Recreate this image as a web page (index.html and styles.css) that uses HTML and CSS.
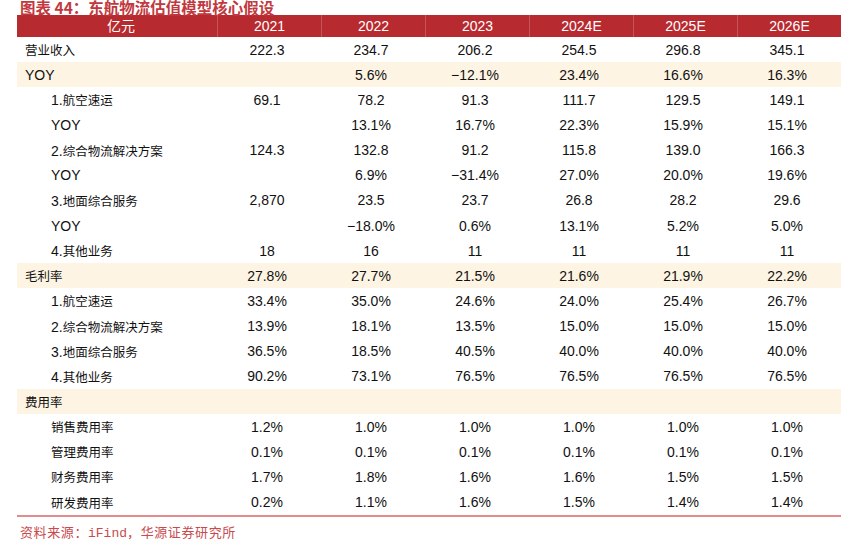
FILE: index.html
```html
<!DOCTYPE html>
<html lang="zh-CN">
<head>
<meta charset="utf-8">
<title>东航物流估值模型核心假设</title>
<link rel="stylesheet" href="styles.css">
</head>
<body>
<div class="page">
  <div class="title">图表 44：东航物流估值模型核心假设</div>
  <div class="table">
    <div class="row head"><div class="lab">亿元</div><div>2021</div><div>2022</div><div>2023</div><div>2024E</div><div>2025E</div><div>2026E</div></div>
    <div class="row"><div class="lab"><span class="zh">营业收入</span></div><div>222.3</div><div>234.7</div><div>206.2</div><div>254.5</div><div>296.8</div><div>345.1</div></div>
    <div class="row hl"><div class="lab">YOY</div><div></div><div>5.6%</div><div>−12.1%</div><div>23.4%</div><div>16.6%</div><div>16.3%</div></div>
    <div class="row"><div class="lab sub">1.<span class="zh">航空速运</span></div><div>69.1</div><div>78.2</div><div>91.3</div><div>111.7</div><div>129.5</div><div>149.1</div></div>
    <div class="row"><div class="lab sub">YOY</div><div></div><div>13.1%</div><div>16.7%</div><div>22.3%</div><div>15.9%</div><div>15.1%</div></div>
    <div class="row"><div class="lab sub">2.<span class="zh">综合物流解决方案</span></div><div>124.3</div><div>132.8</div><div>91.2</div><div>115.8</div><div>139.0</div><div>166.3</div></div>
    <div class="row"><div class="lab sub">YOY</div><div></div><div>6.9%</div><div>−31.4%</div><div>27.0%</div><div>20.0%</div><div>19.6%</div></div>
    <div class="row"><div class="lab sub">3.<span class="zh">地面综合服务</span></div><div>2,870</div><div>23.5</div><div>23.7</div><div>26.8</div><div>28.2</div><div>29.6</div></div>
    <div class="row"><div class="lab sub">YOY</div><div></div><div>−18.0%</div><div>0.6%</div><div>13.1%</div><div>5.2%</div><div>5.0%</div></div>
    <div class="row"><div class="lab sub">4.<span class="zh">其他业务</span></div><div>18</div><div>16</div><div>11</div><div>11</div><div>11</div><div>11</div></div>
    <div class="row hl"><div class="lab"><span class="zh">毛利率</span></div><div>27.8%</div><div>27.7%</div><div>21.5%</div><div>21.6%</div><div>21.9%</div><div>22.2%</div></div>
    <div class="row"><div class="lab sub">1.<span class="zh">航空速运</span></div><div>33.4%</div><div>35.0%</div><div>24.6%</div><div>24.0%</div><div>25.4%</div><div>26.7%</div></div>
    <div class="row"><div class="lab sub">2.<span class="zh">综合物流解决方案</span></div><div>13.9%</div><div>18.1%</div><div>13.5%</div><div>15.0%</div><div>15.0%</div><div>15.0%</div></div>
    <div class="row"><div class="lab sub">3.<span class="zh">地面综合服务</span></div><div>36.5%</div><div>18.5%</div><div>40.5%</div><div>40.0%</div><div>40.0%</div><div>40.0%</div></div>
    <div class="row"><div class="lab sub">4.<span class="zh">其他业务</span></div><div>90.2%</div><div>73.1%</div><div>76.5%</div><div>76.5%</div><div>76.5%</div><div>76.5%</div></div>
    <div class="row hl"><div class="lab"><span class="zh">费用率</span></div><div></div><div></div><div></div><div></div><div></div><div></div></div>
    <div class="row"><div class="lab sub"><span class="zh">销售费用率</span></div><div>1.2%</div><div>1.0%</div><div>1.0%</div><div>1.0%</div><div>1.0%</div><div>1.0%</div></div>
    <div class="row"><div class="lab sub"><span class="zh">管理费用率</span></div><div>0.1%</div><div>0.1%</div><div>0.1%</div><div>0.1%</div><div>0.1%</div><div>0.1%</div></div>
    <div class="row"><div class="lab sub"><span class="zh">财务费用率</span></div><div>1.7%</div><div>1.8%</div><div>1.6%</div><div>1.6%</div><div>1.5%</div><div>1.5%</div></div>
    <div class="row"><div class="lab sub"><span class="zh">研发费用率</span></div><div>0.2%</div><div>1.1%</div><div>1.6%</div><div>1.5%</div><div>1.4%</div><div>1.4%</div></div>
  </div>
  <div class="source">资料来源：<span class="mono">iFind</span>，华源证券研究所</div>
</div>
</body>
</html>
```

FILE: styles.css
```css
html, body {
  margin: 0;
  padding: 0;
  background: #ffffff;
}

.page {
  width: 861px;
  height: 558px;
  overflow: hidden;
  padding-left: 17px;
  box-sizing: border-box;
  font-family: "Liberation Sans", Arial, "Noto Sans CJK SC", sans-serif;
  color: #111111;
}

.title {
  height: 15px;
  line-height: 14px;
  padding-left: 3px;
  font-family: "Noto Sans CJK SC", sans-serif;
  font-weight: 700;
  font-size: 15.5px;
  color: #c1393e;
  white-space: nowrap;
}

.table {
  width: 824px;
  border-bottom: 2px solid #e38c8e;
}

.row {
  display: grid;
  grid-template-columns: 200px repeat(6, 104px);
  height: 25.15px;
  align-items: center;
  font-size: 14px;
}

.row > div {
  text-align: center;
  padding-right: 4px;
  white-space: nowrap;
}

.row > .lab {
  text-align: left;
  padding-left: 8px;
  padding-right: 0;
}

.row > .lab.sub {
  padding-left: 34px;
}

.zh {
  font-family: "Noto Sans CJK SC", sans-serif;
  font-size: 12.5px;
}

.row.hl {
  background: #fdf4e3;
}

.row.head {
  height: 22px;
  background: #b72b30;
  color: #ffffff;
  font-family: "Liberation Sans", Arial, "Noto Sans CJK SC", sans-serif;
}

.row.head > div {
  height: 22px;
  line-height: 22px;
  padding-right: 0;
  text-align: center;
  border-left: 1px solid #c6555a;
}

.row.head > div:first-child {
  border-left: none;
}

.source {
  margin-top: 6px;
  padding-left: 3px;
  font-family: "Noto Sans CJK SC", sans-serif;
  font-size: 13px;
  line-height: 18px;
  color: #c84a4e;
  letter-spacing: 0.6px;
}

.mono {
  font-family: "Liberation Mono", monospace;
  letter-spacing: 0;
}
```
